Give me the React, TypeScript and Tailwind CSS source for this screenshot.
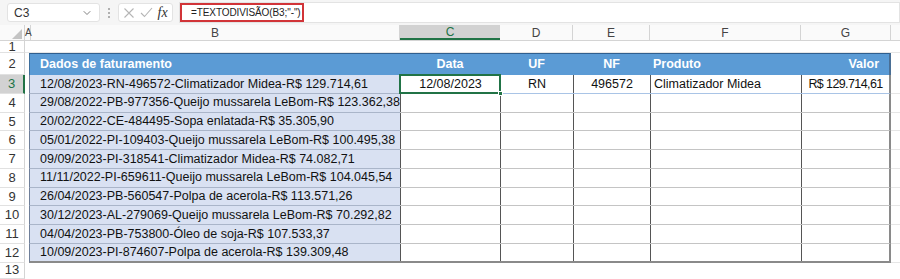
import { ChevronDown } from "lucide-react";

const rows = [
  "12/08/2023-RN-496572-Climatizador Midea-R$ 129.714,61",
  "29/08/2022-PB-977356-Queijo mussarela LeBom-R$ 123.362,38",
  "20/02/2022-CE-484495-Sopa enlatada-R$ 35.305,90",
  "05/01/2022-PI-109403-Queijo mussarela LeBom-R$ 100.495,38",
  "09/09/2023-PI-318541-Climatizador Midea-R$ 74.082,71",
  "11/11/2022-PI-659611-Queijo mussarela LeBom-R$ 104.045,54",
  "26/04/2023-PB-560547-Polpa de acerola-R$ 113.571,26",
  "30/12/2023-AL-279069-Queijo mussarela LeBom-R$ 70.292,82",
  "04/04/2023-PB-753800-Óleo de soja-R$ 107.533,37",
  "10/09/2023-PI-874607-Polpa de acerola-R$ 139.309,48",
];

const font = { fontFamily: '"Liberation Sans", Arial, sans-serif' };

const RowNum = ({ n, active }: { n: number; active?: boolean }) => (
  <div
    className={
      "w-[25px] shrink-0 flex items-center justify-center text-[13px] border-b border-[#e1e1e1] " +
      (active ? "bg-[#d2d2d2] text-[#217346] border-r-2 border-r-[#217346]" : "bg-white text-[#333] border-r border-r-[#d4d4d4]")
    }
  >
    {n}
  </div>
);

const App = () => {
  return (
    <div className="w-[900px] h-[279px] overflow-hidden bg-white text-[#111]" style={font}>
      {/* formula bar */}
      <div className="h-[25px] bg-[#f5f5f5] flex items-center pl-[7px] gap-[6px]">
        <div className="w-[93px] h-[19px] bg-white border border-[#e3e3e3] rounded-[3px] flex items-center justify-between px-[6px] text-[12px] text-[#333]">
          <span>C3</span>
          <ChevronDown size={12} strokeWidth={1.5} className="text-[#555]" />
        </div>
        <div className="flex flex-col gap-[2px] mx-[2px]">
          <span className="w-[2px] h-[2px] bg-[#999] rounded-full" />
          <span className="w-[2px] h-[2px] bg-[#999] rounded-full" />
          <span className="w-[2px] h-[2px] bg-[#999] rounded-full" />
        </div>
        <div className="w-[55px] h-[19px] bg-white border border-[#e3e3e3] rounded-[3px] flex items-center justify-around px-[2px]">
          <svg width="12" height="12" viewBox="0 0 12 12" stroke="#b5b5b5" strokeWidth="1.1" fill="none">
            <path d="M1.5 1.5 10.5 10.5M10.5 1.5 1.5 10.5" />
          </svg>
          <svg width="13" height="11" viewBox="0 0 13 11" stroke="#b5b5b5" strokeWidth="1.1" fill="none">
            <path d="M1 6 4.5 9.5 12 1" />
          </svg>
          <span className="text-[14px] italic text-[#333] leading-none" style={{ fontFamily: '"Liberation Serif", serif' }}>
            fx
          </span>
        </div>
        <div className="flex-1 h-[21px] bg-white border border-[#e3e3e3] flex items-stretch">
          <div className="w-[124px] border-2 border-[#d13438] flex items-center pl-[9px] text-[10px] tracking-[-0.1px] text-[#222] whitespace-nowrap">
            =TEXTODIVISÃO(B3;"-")
          </div>
        </div>
      </div>

      {/* column headers */}
      <div className="h-[16px] flex text-[12px] text-[#444] bg-[#fafafa] border-b border-[#d4d4d4]">
        <div className="w-[25px] shrink-0 border-r border-[#d4d4d4] flex items-end justify-end pr-[2px] pb-[1px]">
          <svg width="10" height="10" viewBox="0 0 10 10">
            <path d="M10 0 10 10 0 10Z" fill="#c4c4c4" />
          </svg>
        </div>
        <div className="w-[6px] shrink-0 border-r border-[#d4d4d4] flex items-center text-[10px]">
          <span>A</span>
        </div>
        <div className="w-[369px] shrink-0 border-r border-[#d4d4d4] flex items-center justify-center">B</div>
        <div className="w-[100px] shrink-0 bg-[#d2d2d2] border-b-2 border-[#217346] flex items-center justify-center text-[#217346]">C</div>
        <div className="w-[73px] shrink-0 border-r border-[#d4d4d4] flex items-center justify-center">D</div>
        <div className="w-[77px] shrink-0 border-r border-[#d4d4d4] flex items-center justify-center">E</div>
        <div className="w-[151px] shrink-0 border-r border-[#d4d4d4] flex items-center justify-center">F</div>
        <div className="w-[90px] shrink-0 border-r border-[#d4d4d4] flex items-center justify-center">G</div>
        <div className="flex-1" />
      </div>

      {/* row 1 */}
      <div className="h-[12px] flex">
        <RowNum n={1} />
        <div className="flex-1 border-b border-[#e6e6e6]" />
      </div>

      {/* row 2: table header */}
      <div className="h-[22px] flex">
        <RowNum n={2} />
        <div className="w-[4px] shrink-0" />
        <div className="w-[862px] shrink-0 flex bg-[#5b9bd5] text-white font-bold text-[12.5px] border-t border-[#2f5f8f] border-l border-l-[#3d6e9c] border-r-2 border-r-[#4a6f95] whitespace-nowrap">
          <div className="w-[370px] shrink-0 flex items-center pl-[10px]">Dados de faturamento</div>
          <div className="w-[100px] shrink-0 flex items-center justify-center">Data</div>
          <div className="w-[73px] shrink-0 flex items-center justify-center">UF</div>
          <div className="w-[77px] shrink-0 flex items-center justify-center">NF</div>
          <div className="w-[151px] shrink-0 flex items-center pl-[3px]">Produto</div>
          <div className="flex-1 flex items-center justify-end pr-[10px]">Valor</div>
        </div>
        <div className="flex-1" />
      </div>

      {/* data rows */}
      {rows.map((r, i) => {
        const first = i === 0;
        const last = i === rows.length - 1;
        return (
          <div key={i} className="h-[18.75px] flex">
            <RowNum n={i + 3} active={first} />
            <div className="w-[4px] shrink-0" />
            <div
              className={
                "w-[371px] shrink-0 bg-[#d9e1f2] border-l border-[#6f7f99] flex items-center pl-[10px] text-[12.5px] whitespace-nowrap overflow-hidden " +
                (last ? "border-b-2 border-b-[#8a8a8a]" : "border-b border-b-[#aab5c9]")
              }
            >
              {r}
            </div>
            <div
              className={
                "w-[491px] shrink-0 flex text-[12.5px] whitespace-nowrap border-r-2 border-[#8a8a8a] " +
                (last ? "border-b-2 border-b-[#8a8a8a]" : first ? "border-b border-b-[#a9c4e6]" : "border-b border-b-[#c4c4c4]")
              }
            >
              <div
                className={
                  "w-[100px] shrink-0 border-l border-[#555] flex items-center justify-center relative " +
                  (first ? "outline-2 outline-[#217346] -outline-offset-1 z-10" : "")
                }
              >
                {first ? "12/08/2023" : ""}
                {first && <span className="absolute -right-[3px] -bottom-[3px] w-[5px] h-[5px] bg-[#217346] border border-white" />}
              </div>
              <div className="w-[73px] shrink-0 border-l border-[#555] flex items-center justify-center">{first ? "RN" : ""}</div>
              <div className="w-[77px] shrink-0 border-l border-[#555] flex items-center justify-center">{first ? "496572" : ""}</div>
              <div className="w-[151px] shrink-0 border-l border-[#555] flex items-center pl-[3px]">{first ? "Climatizador Midea" : ""}</div>
              <div className="flex-1 border-l border-[#555] flex items-center justify-center tracking-[-0.6px]">{first ? "R$ 129.714,61" : ""}</div>
            </div>
            <div className="flex-1 border-b border-[#e6e6e6]" />
          </div>
        );
      })}

      {/* row 13 */}
      <div className="h-[16px] flex">
        <RowNum n={13} />
        <div className="flex-1" />
      </div>
    </div>
  );
};

export default App;
